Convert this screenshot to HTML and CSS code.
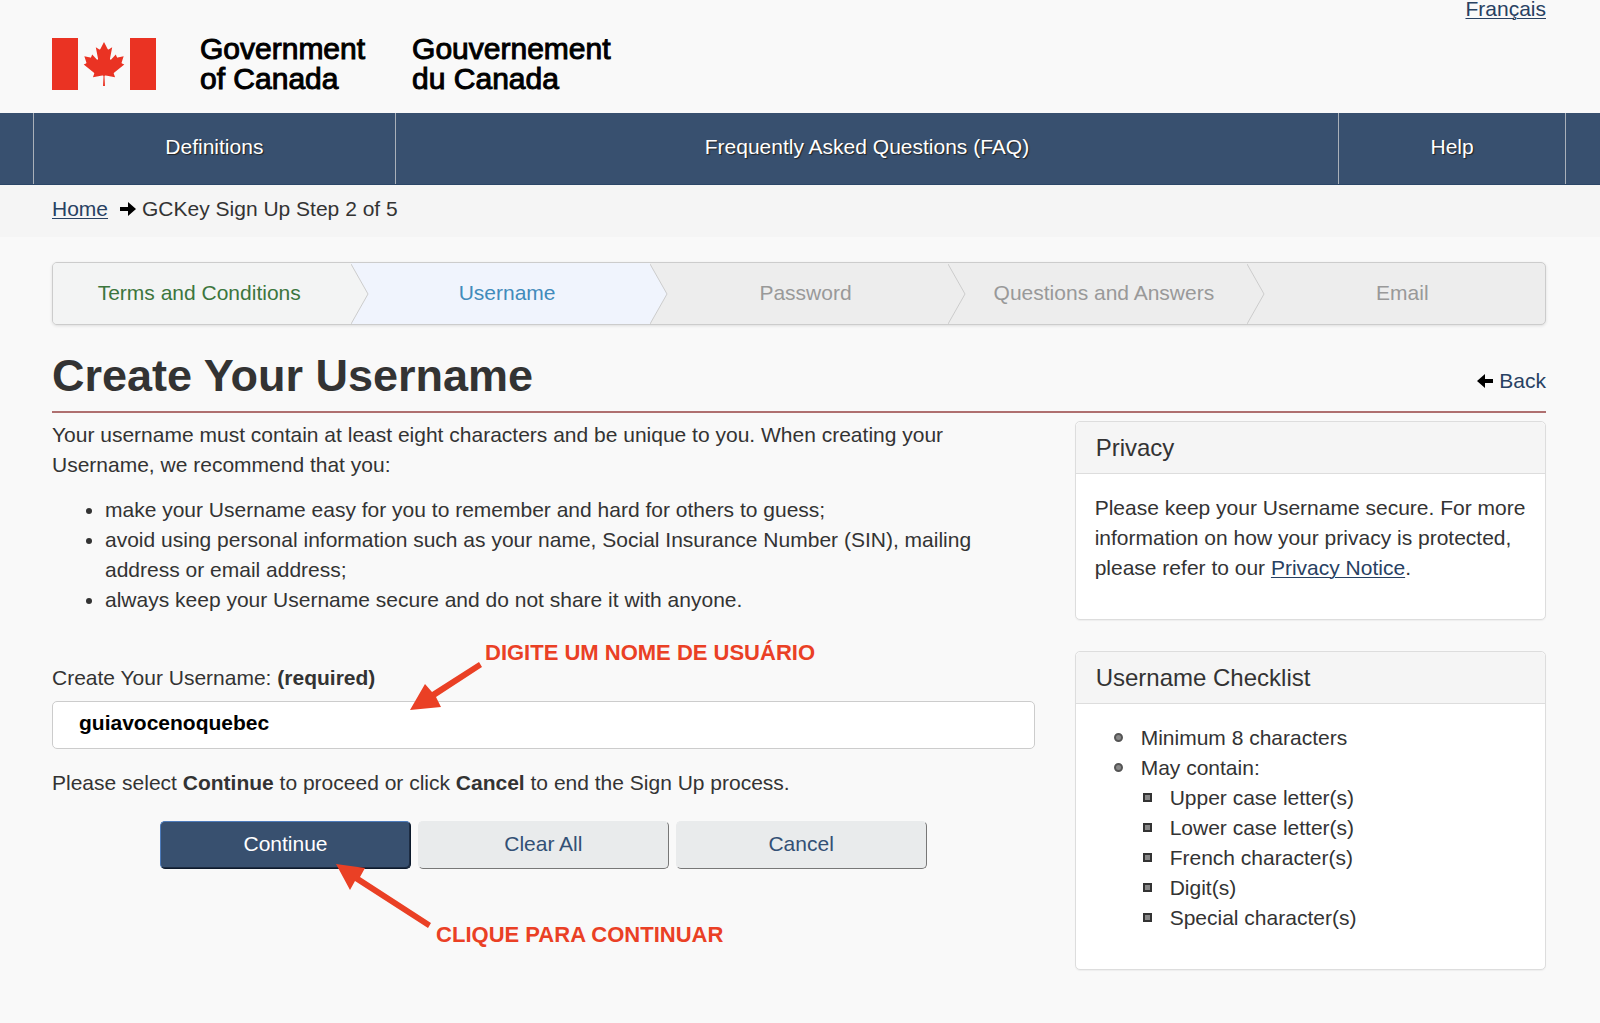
FILE: index.html
```html
<!DOCTYPE html>
<html lang="en">
<head>
  <meta charset="utf-8">
  <title>Create Your Username</title>
  <link rel="stylesheet" href="styles.css">
</head>
<body>
  <header class="site-header container">
    <a class="language-link" href="#fr" lang="fr">Français</a>
    <div class="brand">
      <svg class="flag" viewBox="0 0 104 52" aria-hidden="true">
        <path d="M0 0h26v52H0zM78 0h26v52H78z"/>
        <svg x="30" y="4" width="44" height="44" viewBox="-2015 -2000 4030 4030">
          <path d="m-90 2030 45-863a95 95 0 0 0-111-98l-859 151 116-320a65 65 0 0 0-20-73l-941-762 212-99a65 65 0 0 0 34-79l-186-572 542 115a65 65 0 0 0 73-38l105-247 423 454a65 65 0 0 0 111-57l-204-1052 327 189a65 65 0 0 0 91-27l332-652 332 652a65 65 0 0 0 91 27l327-189-204 1052a65 65 0 0 0 111 57l423-454 105 247a65 65 0 0 0 73 38l542-115-186 572a65 65 0 0 0 34 79l212 99-941 762a65 65 0 0 0-20 73l116 320-859-151a95 95 0 0 0-111 98l45 863z"/>
        </svg>
      </svg>
      <span class="brand-name">Government<br>of Canada</span>
      <span class="brand-name" lang="fr">Gouvernement<br>du Canada</span>
    </div>
  </header>

  <nav class="main-nav">
    <ul class="main-nav-list">
      <li><a href="#definitions">Definitions</a></li>
      <li><a href="#faq">Frequently Asked Questions (FAQ)</a></li>
      <li><a href="#help">Help</a></li>
    </ul>
  </nav>

  <nav class="breadcrumb">
    <div class="breadcrumb-inner container">
      <a class="link" href="#home">Home</a>
      <svg class="arrow" viewBox="0 0 16 14" aria-hidden="true"><path d="M0 5h8V0l8 7-8 7V9H0z"/></svg>
      <span>GCKey Sign Up Step 2 of 5</span>
    </div>
  </nav>

  <main class="container">
    <ol class="steps">
      <li class="step step-done">Terms and Conditions
        <svg class="chevron" viewBox="0 0 18 61" preserveAspectRatio="none" aria-hidden="true"><path d="M0 1l17 30L0 61"/></svg></li>
      <li class="step step-current">Username
        <svg class="chevron" viewBox="0 0 18 61" preserveAspectRatio="none" aria-hidden="true"><path d="M0 1l17 30L0 61"/></svg></li>
      <li class="step">Password
        <svg class="chevron" viewBox="0 0 18 61" preserveAspectRatio="none" aria-hidden="true"><path d="M0 1l17 30L0 61"/></svg></li>
      <li class="step">Questions and Answers
        <svg class="chevron" viewBox="0 0 18 61" preserveAspectRatio="none" aria-hidden="true"><path d="M0 1l17 30L0 61"/></svg></li>
      <li class="step">Email</li>
    </ol>

    <div class="title-row">
      <h1>Create Your Username</h1>
      <a class="back-link" href="#back">
        <svg class="arrow" viewBox="0 0 16 14" aria-hidden="true"><path d="M16 5H8V0L0 7l8 7V9h8z"/></svg>
        Back</a>
    </div>

    <div class="columns">
      <section class="column">
        <p class="intro">Your username must contain at least eight characters and be unique to you. When creating your Username, we recommend that you:</p>
        <ul class="tips">
          <li>make your Username easy for you to remember and hard for others to guess;</li>
          <li>avoid using personal information such as your name, Social Insurance Number (SIN), mailing address or email address;</li>
          <li>always keep your Username secure and do not share it with anyone.</li>
        </ul>

        <form class="form">
          <div class="field">
            <label for="username">Create Your Username: <strong>(required)</strong></label>
            <input class="text-input" id="username" type="text" value="guiavocenoquebec">
            <div class="note note-username">
              <svg class="note-arrow" viewBox="0 0 72 50" aria-hidden="true"><path d="M69 0l3 5-46 30 5 10L0 48 15 22l7 8z"/></svg>
              <span>DIGITE UM NOME DE USUÁRIO</span>
            </div>
          </div>
          <p class="hint">Please select <strong>Continue</strong> to proceed or click <strong>Cancel</strong> to end the Sign Up process.</p>
          <div class="actions">
            <button class="button button-primary" type="submit">Continue</button>
            <button class="button" type="reset">Clear All</button>
            <button class="button" type="button">Cancel</button>
            <div class="note note-continue">
              <svg class="note-arrow-long" viewBox="0 0 96 64" aria-hidden="true"><path d="M0 0l29 4-5 9 71 46-3 5-73-47-5 9z"/></svg>
              <span>CLIQUE PARA CONTINUAR</span>
            </div>
          </div>
        </form>
      </section>

      <aside class="column panels">
        <section class="panel">
          <h2>Privacy</h2>
          <div class="panel-body">
            <p>Please keep your Username secure. For more information on how your privacy is protected, please refer to our <a class="link" href="#privacy">Privacy Notice</a>.</p>
          </div>
        </section>
        <section class="panel">
          <h2>Username Checklist</h2>
          <div class="panel-body">
            <ul class="checklist">
              <li>Minimum 8 characters</li>
              <li>May contain:
                <ul>
                  <li>Upper case letter(s)</li>
                  <li>Lower case letter(s)</li>
                  <li>French character(s)</li>
                  <li>Digit(s)</li>
                  <li>Special character(s)</li>
                </ul>
              </li>
            </ul>
          </div>
        </section>
      </aside>
    </div>
  </main>
</body>
</html>
```
FILE: styles.css
```css
* {
  box-sizing: border-box;
}

body {
  margin: 0;
  background: #f9f9f9;
  color: #333;
  font-family: "Liberation Sans", Arial, sans-serif;
  font-size: 21px;
  line-height: 30px;
}

h1, h2, p, ul, ol {
  margin: 0;
  padding: 0;
}

ol, ul {
  list-style: none;
}

.container {
  padding: 0 54px 0 52px;
}

.link,
.language-link {
  color: #284162;
  text-decoration: underline;
  text-underline-offset: 2px;
  text-decoration-thickness: 1px;
}

/* Header */
.site-header {
  display: flex;
  flex-direction: column;
  padding-bottom: 19px;
}

.language-link {
  align-self: flex-end;
  margin-top: -6px;
}

.brand {
  display: flex;
  align-items: center;
  margin-top: 10px;
}

.flag {
  width: 104px;
  height: 52px;
  margin-right: 44px;
  fill: #ea3323;
}

.brand-name {
  margin-right: 47px;
  color: #000;
  font-size: 30px;
  -webkit-text-stroke: 1px #000;
}

/* Main navigation */
.main-nav {
  padding: 0 34px 0 33px;
  border-bottom: 1px solid #2b4667;
  background: #38506f;
}

.main-nav-list {
  display: grid;
  grid-template-columns: 362fr 944fr 227fr;
  border-left: 1px solid #a9b0b9;
}

.main-nav-list li {
  border-right: 1px solid #a9b0b9;
}

.main-nav-list a {
  display: block;
  padding: 19px 0 22px;
  color: #fff;
  text-align: center;
  text-decoration: none;
  text-shadow: 1px 1px 1px #222;
}

/* Breadcrumb */
.breadcrumb {
  background: #f5f5f5;
}

.breadcrumb-inner {
  display: flex;
  align-items: center;
  padding-top: 9px;
  padding-bottom: 13px;
}

.arrow {
  width: 16px;
  height: 14px;
  fill: #000;
}

.breadcrumb .arrow {
  margin: 0 6px 0 12px;
}

/* Progress steps */
.steps {
  display: grid;
  grid-template-columns: repeat(5, 1fr);
  margin-top: 25px;
  border: 1px solid #ccc;
  border-radius: 5px;
  background: #ededed;
  box-shadow: 0 1px 3px #ddd;
}

.step {
  position: relative;
  padding: 15px 0 16px 13px;
  color: #999;
  text-align: center;
}

.step-done {
  padding-right: 6px;
  padding-left: 0;
  border-radius: 4px 0 0 4px;
  background: #f3f4f4;
  color: #3c763d;
}

.step-current {
  background: #f0f4fd;
  color: #428bbb;
}

.chevron {
  position: absolute;
  z-index: 1;
  top: 0;
  right: -18px;
  width: 18px;
  height: 100%;
  fill: #ededed;
  stroke: #ccc;
}

.step-done .chevron {
  fill: #f3f4f4;
}

.step-current .chevron {
  fill: #f0f4fd;
}

/* Page title */
.title-row {
  display: flex;
  align-items: flex-end;
  justify-content: space-between;
  margin-top: 26px;
  padding-bottom: 10px;
  border-bottom: 2px solid #af7070;
}

h1 {
  font-size: 45px;
  line-height: 50px;
}

.back-link {
  display: flex;
  gap: 6px;
  align-items: center;
  margin-bottom: 5px;
  color: #284162;
  text-decoration: none;
}

/* Content columns */
.columns {
  display: grid;
  grid-template-columns: 2fr 1fr;
  margin: 0 -20px;
}

.column {
  padding: 7px 20px;
}

.tips {
  margin-top: 15px;
  padding-left: 53px;
  list-style: disc;
}

.form {
  margin-top: 48px;
}

.field {
  position: relative;
}

.field label {
  display: block;
}

.text-input {
  display: block;
  width: 100%;
  height: 48px;
  margin-top: 8px;
  padding: 0 26px 4px;
  border: 1px solid #ccc;
  border-radius: 5px;
  background: #fff;
  color: #000;
  font: bold 21px "Liberation Sans", Arial, sans-serif;
}

.hint {
  margin-top: 19px;
}

.actions {
  position: relative;
  display: grid;
  grid-template-columns: repeat(3, 1fr);
  gap: 7px;
  width: 78%;
  margin: 23px auto 0;
}

.button {
  height: 48px;
  padding: 0 0 3px;
  border: 1px solid;
  border-color: #e9ebec #777 #777 #e9ebec;
  border-radius: 5px;
  background: #e9ebec;
  color: #335075;
  font: 21px "Liberation Sans", Arial, sans-serif;
}

.button-primary {
  border-color: #4d7bbb #0d1a2c #0d1a2c #4d7bbb;
  background: #38506f;
  box-shadow: inset -1px -1px #1d2c42;
  color: #fff;
}

/* Tutorial notes laid over the form */
.note {
  position: absolute;
  display: flex;
  color: #ea4025;
  font-size: 22px;
  font-weight: bold;
  white-space: nowrap;
}

.note svg {
  fill: #ea4025;
}

.note-username {
  top: -25px;
  left: 358px;
  gap: 3px;
}

.note-arrow {
  width: 72px;
  height: 50px;
  margin-top: 24px;
}

.note-continue {
  top: 43px;
  left: 176px;
  gap: 4px;
  align-items: flex-end;
}

.note-arrow-long {
  width: 96px;
  height: 64px;
  margin-bottom: 22px;
}

/* Side panels */
.panels {
  display: grid;
  gap: 31px;
  align-content: start;
  padding-top: 8px;
}

.panel {
  border: 1px solid #ddd;
  border-radius: 5px;
  background: #fff;
  box-shadow: 0 1px 1px #eee;
}

.panel h2 {
  padding: 11px 20px 10px;
  border-bottom: 1px solid #ddd;
  border-radius: 5px 5px 0 0;
  background: #f5f5f5;
  font-size: 24px;
  font-weight: normal;
}

.panel-body {
  padding: 19px 19px 36px;
}

.checklist > li {
  position: relative;
  padding-left: 46px;
}

.checklist ul li {
  position: relative;
  padding-left: 29px;
}

.checklist li::before {
  position: absolute;
  top: 10px;
  left: 19px;
  width: 5px;
  height: 5px;
  border: 2px solid #555;
  border-radius: 5px;
  background: #888;
  content: "";
}

.checklist ul li::before {
  left: 2px;
  border-color: #333;
  border-radius: 0;
}
```
